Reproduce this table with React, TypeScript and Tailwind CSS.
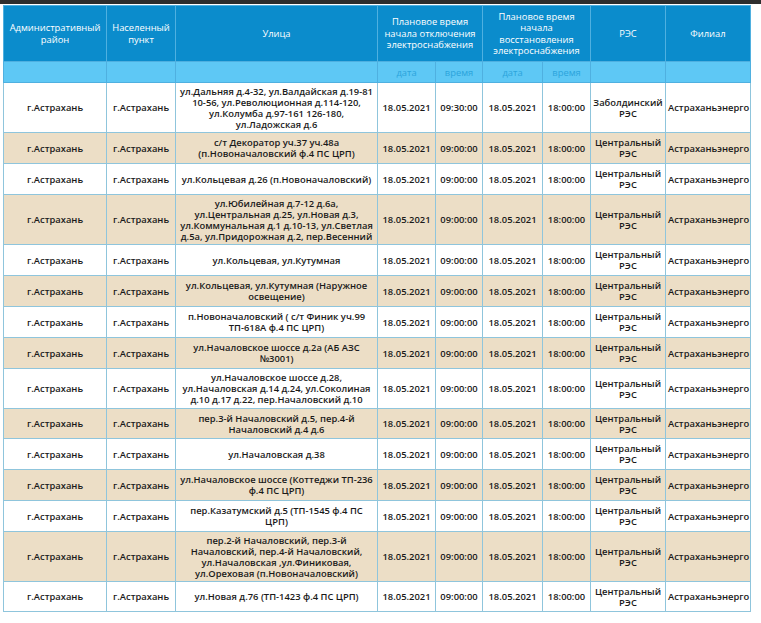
const rows: { street: string[]; off: string; res: string; h: string; tan: boolean }[] = [
  { street: ["ул.Дальняя д.4-32, ул.Валдайская д.19-81", "10-56, ул.Революционная д.114-120,", "ул.Колумба д.97-161 126-180,", "ул.Ладожская д.6"], off: "09:30:00", res: "Заболдинский", h: "h-[50px]", tan: false },
  { street: ["с/т Декоратор уч.37 уч.48а", "(п.Новоначаловский ф.4 ПС ЦРП)"], off: "09:00:00", res: "Центральный", h: "h-[31px]", tan: true },
  { street: ["ул.Кольцевая д.26 (п.Новоначаловский)"], off: "09:00:00", res: "Центральный", h: "h-[31px]", tan: false },
  { street: ["ул.Юбилейная д.7-12 д.6а,", "ул.Центральная д.25, ул.Новая д.3,", "ул.Коммунальная д.1 д.10-13, ул.Светлая", "д.5а, ул.Придорожная д.2, пер.Весенний"], off: "09:00:00", res: "Центральный", h: "h-[50px]", tan: true },
  { street: ["ул.Кольцевая, ул.Кутумная"], off: "09:00:00", res: "Центральный", h: "h-[31px]", tan: false },
  { street: ["ул.Кольцевая, ул.Кутумная (Наружное", "освещение)"], off: "09:00:00", res: "Центральный", h: "h-[31px]", tan: true },
  { street: ["п.Новоначаловский ( с/т Финик уч.99", "ТП-618А ф.4 ПС ЦРП)"], off: "09:00:00", res: "Центральный", h: "h-[31px]", tan: false },
  { street: ["ул.Началовское шоссе д.2а (АБ АЗС", "№3001)"], off: "09:00:00", res: "Центральный", h: "h-[31px]", tan: true },
  { street: ["ул.Началовское шоссе д.28,", "ул.Началовская д.14 д.24, ул.Соколиная", "д.10 д.17 д.22, пер.Началовский д.10"], off: "09:00:00", res: "Центральный", h: "h-[40px]", tan: false },
  { street: ["пер.3-й Началовский д.5, пер.4-й", "Началовский д.4 д.6"], off: "09:00:00", res: "Центральный", h: "h-[30px]", tan: true },
  { street: ["ул.Началовская д.38"], off: "09:00:00", res: "Центральный", h: "h-[31px]", tan: false },
  { street: ["ул.Началовское шоссе (Коттеджи ТП-236", "ф.4 ПС ЦРП)"], off: "09:00:00", res: "Центральный", h: "h-[31px]", tan: true },
  { street: ["пер.Казатумский д.5 (ТП-1545 ф.4 ПС", "ЦРП)"], off: "09:00:00", res: "Центральный", h: "h-[31px]", tan: false },
  { street: ["пер.2-й Началовский, пер.3-й", "Началовский, пер.4-й Началовский,", "ул.Началовская ,ул.Финиковая,", "ул.Ореховая (п.Новоначаловский)"], off: "09:00:00", res: "Центральный", h: "h-[50px]", tan: true },
  { street: ["ул.Новая д.76 (ТП-1423 ф.4 ПС ЦРП)"], off: "09:00:00", res: "Центральный", h: "h-[30px]", tan: false },
]

const th = "border border-[#4fb0e0] px-[2px] align-middle text-center font-normal"
const td = "border border-[#8fc5dc] px-[2px] py-0 align-middle text-center"

export default function App() {
  return (
    <div className="min-h-[623px] w-[761px] bg-white text-[#1a1a1a]" style={{ fontFamily: '"Open Sans", "Noto Sans", sans-serif' }}>
      <div className="h-[4px] bg-[#2e2e2e]" />
      <table className="ml-[3px] mt-[1px] w-[747px] table-fixed border-collapse text-[9.4px] leading-[11px]">
        <colgroup>
          <col className="w-[103px]" />
          <col className="w-[69px]" />
          <col className="w-[202px]" />
          <col className="w-[58px]" />
          <col className="w-[47px]" />
          <col className="w-[60px]" />
          <col className="w-[48px]" />
          <col className="w-[75px]" />
          <col className="w-[85px]" />
        </colgroup>
        <thead>
          <tr className="h-[56px] bg-[#0b8ccc] text-white leading-[11.5px]">
            <th className={th}>Административный<br />район</th>
            <th className={th}>Населенный<br />пункт</th>
            <th className={th}>Улица</th>
            <th className={th} colSpan={2}>Плановое время<br />начала отключения<br />электроснабжения</th>
            <th className={th} colSpan={2}>Плановое время<br />начала<br />восстановления<br />электроснабжения</th>
            <th className={th}>РЭС</th>
            <th className={th}>Филиал</th>
          </tr>
          <tr className="h-[21px] bg-[#5ec8f5] text-[#2ba4dc]">
            <th className={th} />
            <th className={th} />
            <th className={th} />
            <th className={th}>дата</th>
            <th className={th}>время</th>
            <th className={th}>дата</th>
            <th className={th}>время</th>
            <th className={th} />
            <th className={th} />
          </tr>
        </thead>
        <tbody className="font-semibold">
          {rows.map((r, i) => (
            <tr key={i} className={`${r.h} ${r.tan ? "bg-[#ecdec6]" : "bg-white"}`}>
              <td className={td}>г.Астрахань</td>
              <td className={td}>г.Астрахань</td>
              <td className={`${td} whitespace-nowrap`}>
                {r.street.map((s, j) => (
                  <div key={j}>{s}</div>
                ))}
              </td>
              <td className={td}>18.05.2021</td>
              <td className={td}>{r.off}</td>
              <td className={td}>18.05.2021</td>
              <td className={td}>18:00:00</td>
              <td className={td}>
                <div>{r.res}</div>
                <div>РЭС</div>
              </td>
              <td className={`${td} whitespace-nowrap`}>Астраханьэнерго</td>
            </tr>
          ))}
        </tbody>
      </table>
    </div>
  )
}
